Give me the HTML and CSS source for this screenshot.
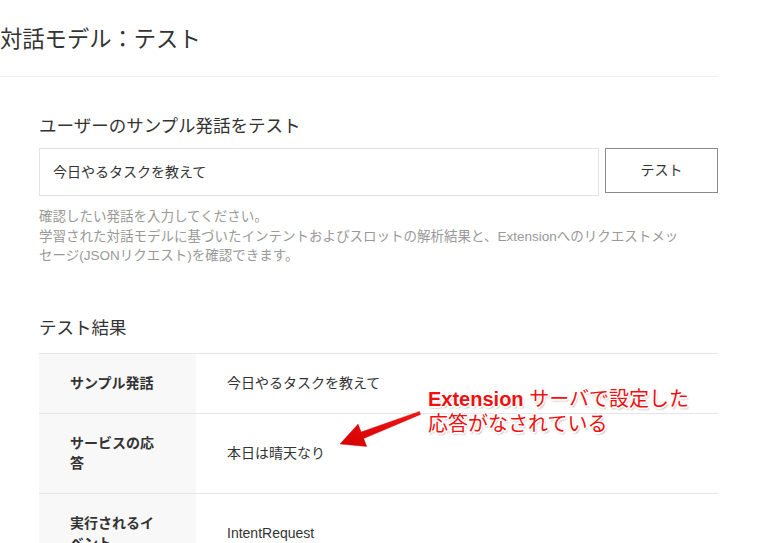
FILE: index.html
```html
<!DOCTYPE html>
<html lang="ja">
<head>
<meta charset="utf-8">
<title>対話モデル：テスト</title>
<link rel="stylesheet" href="styles.css">
</head>
<body>
<div class="page">
  <header class="header">
    <h1 class="title">対話モデル：テスト</h1>
  </header>

  <section class="section section-test">
    <h2 class="section-title">ユーザーのサンプル発話をテスト</h2>
    <div class="input-row">
      <input class="utterance" type="text" value="今日やるタスクを教えて">
      <button class="btn" type="button">テスト</button>
    </div>
    <p class="help">確認したい発話を入力してください。<br>学習された対話モデルに基づいたインテントおよびスロットの解析結果と、Extensionへのリクエストメッ<br>セージ(JSONリクエスト)を確認できます。</p>
  </section>

  <section class="section section-result">
    <h2 class="section-title">テスト結果</h2>
    <table class="result">
      <tr>
        <th class="label">サンプル発話</th>
        <td class="value">今日やるタスクを教えて</td>
      </tr>
      <tr>
        <th class="label">サービスの応答</th>
        <td class="value">本日は晴天なり</td>
      </tr>
      <tr>
        <th class="label">実行されるイベント</th>
        <td class="value">IntentRequest</td>
      </tr>
    </table>
  </section>
</div>

<div class="annotation">
  <svg class="arrow" width="90" height="44" viewBox="335 406 90 44" aria-hidden="true">
    <defs>
      <linearGradient id="ag" x1="1" y1="0" x2="0" y2="1">
        <stop offset="0" stop-color="#f01818"/>
        <stop offset="1" stop-color="#d60000"/>
      </linearGradient>
    </defs>
    <polygon fill="url(#ag)" stroke="#c80000" stroke-width="0.4" points="419.5,411.4 361.1,432.0 358.1,424.1 340,444 366.7,446.5 363.7,438.6 420.5,414.4"/>
  </svg>
  <div class="note">
    <div><span class="note-en">Extension</span> サーバで設定した</div>
    <div>応答がなされている</div>
  </div>
</div>
</body>
</html>
```

FILE: styles.css
```css
html, body {
  margin: 0;
  padding: 0;
  background: #ffffff;
}

body {
  font-family: "Liberation Sans", "Noto Sans CJK JP", sans-serif;
  color: #333333;
  position: relative;
  width: 769px;
  height: 543px;
  overflow: hidden;
}

.page {
  width: 718px;
}

.header {
  padding-top: 25px;
  padding-bottom: 21px;
  border-bottom: 1px solid #efefef;
}

.title {
  margin: 0;
  font-size: 22.3px;
  line-height: 30px;
  font-weight: normal;
  color: #333333;
}

.section {
  padding-left: 39px;
}

.section-test {
  padding-top: 37px;
}

.section-title {
  margin: 0;
  font-size: 17.5px;
  line-height: 24px;
  font-weight: normal;
  color: #333333;
}

.input-row {
  display: flex;
  align-items: flex-start;
  gap: 6px;
  margin-top: 10px;
}

.utterance {
  flex: 1;
  box-sizing: border-box;
  height: 48px;
  margin: 0;
  padding: 0 0 2px 13px;
  border: 1px solid #e3e3e3;
  border-radius: 0;
  background: #ffffff;
  font-family: "Liberation Sans", "Noto Sans CJK JP", sans-serif;
  font-size: 14px;
  color: #333333;
  outline: none;
}

.btn {
  box-sizing: border-box;
  width: 113px;
  height: 45px;
  margin: 0;
  padding: 0 0 3px;
  border: 1px solid #8a8a8a;
  border-radius: 0;
  background: #ffffff;
  font-family: "Liberation Sans", "Noto Sans CJK JP", sans-serif;
  font-size: 14px;
  color: #333333;
}

.help {
  margin: 11px 0 0;
  font-size: 13.5px;
  line-height: 19.5px;
  color: #999999;
}

.section-result {
  padding-top: 50px;
}

.result {
  margin-top: 13px;
  width: 679px;
  border-collapse: collapse;
  font-size: 14px;
}

.result tr {
  border-top: 1px solid #e5e5e5;
  border-bottom: 1px solid #e5e5e5;
}

.label {
  width: 96px;
  padding: 20px 30px 20px 31px;
  background: #f8f8f8;
  text-align: left;
  font-weight: bold;
  line-height: 19.5px;
  vertical-align: top;
  color: #333333;
}

.value {
  padding: 20px 20px 20px 31px;
  line-height: 19.5px;
  vertical-align: middle;
  color: #333333;
}

.annotation {
  position: absolute;
  left: 0;
  top: 0;
  width: 0;
  height: 0;
}

.arrow {
  position: absolute;
  left: 335px;
  top: 406px;
}

.note {
  position: absolute;
  left: 428px;
  top: 387px;
  white-space: nowrap;
  font-family: "Liberation Sans", "Noto Sans CJK JP", sans-serif;
  font-size: 20px;
  line-height: 25px;
  color: #ee1111;
  text-shadow:
    -1px -1px 0 #fff, 1px -1px 0 #fff, -1px 1px 0 #fff, 1px 1px 0 #fff,
    0 -1.5px 0 #fff, 0 1.5px 0 #fff, -1.5px 0 0 #fff, 1.5px 0 0 #fff,
    1px 2px 2px rgba(0, 0, 0, 0.45);
}

.note-en {
  font-weight: bold;
}
```
